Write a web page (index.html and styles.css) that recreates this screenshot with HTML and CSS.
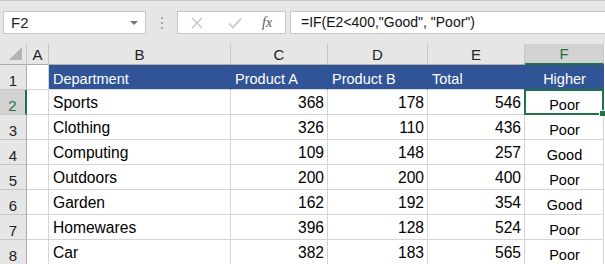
FILE: index.html
```html
<!DOCTYPE html>
<html lang="en">

<head>
    <meta charset="UTF-8">
    <title>Sheet</title>
    <link rel="stylesheet" href="styles.css">
</head>

<body>
    <!-- formula bar -->
    <div class="toolbar">
        <div class="name-box">
            <span>F2</span>
            <span class="drop"></span>
        </div>
        <div class="dots"><i></i><i></i><i></i></div>
        <div class="fx-buttons">
            <svg class="btn-icon" width="12" height="12" viewBox="0 0 12 12">
                <path d="M1 1 L11 11 M11 1 L1 11" stroke="#c4c4c4" stroke-width="1.4" fill="none" />
            </svg>
            <svg class="btn-icon" width="14" height="12" viewBox="0 0 14 12">
                <path d="M1 6.5 L5 10.5 L13 1.5" stroke="#c4c4c4" stroke-width="1.6" fill="none" />
            </svg>
            <span class="fx">fx</span>
        </div>
        <div class="formula">=IF(E2&lt;400,"Good", "Poor")</div>
    </div>

    <!-- grid -->
    <div class="sheet">
        <div class="hd corner"><span class="tri"></span></div>
        <div class="hd col">A</div>
        <div class="hd col">B</div>
        <div class="hd col">C</div>
        <div class="hd col">D</div>
        <div class="hd col">E</div>
        <div class="hd col active-col">F</div>

        <div class="hd row">1</div>
        <div class="cell"></div>
        <div class="cell th">Department</div>
        <div class="cell th">Product A</div>
        <div class="cell th">Product B</div>
        <div class="cell th">Total</div>
        <div class="cell th center">Higher</div>

        <div class="hd row active-row">2</div>
        <div class="cell"></div>
        <div class="cell">Sports</div>
        <div class="cell num">368</div>
        <div class="cell num">178</div>
        <div class="cell num">546</div>
        <div class="cell res selected">Poor</div>

        <div class="hd row">3</div>
        <div class="cell"></div>
        <div class="cell">Clothing</div>
        <div class="cell num">326</div>
        <div class="cell num">110</div>
        <div class="cell num">436</div>
        <div class="cell res">Poor</div>

        <div class="hd row">4</div>
        <div class="cell"></div>
        <div class="cell">Computing</div>
        <div class="cell num">109</div>
        <div class="cell num">148</div>
        <div class="cell num">257</div>
        <div class="cell res">Good</div>

        <div class="hd row">5</div>
        <div class="cell"></div>
        <div class="cell">Outdoors</div>
        <div class="cell num">200</div>
        <div class="cell num">200</div>
        <div class="cell num">400</div>
        <div class="cell res">Poor</div>

        <div class="hd row">6</div>
        <div class="cell"></div>
        <div class="cell">Garden</div>
        <div class="cell num">162</div>
        <div class="cell num">192</div>
        <div class="cell num">354</div>
        <div class="cell res">Good</div>

        <div class="hd row">7</div>
        <div class="cell"></div>
        <div class="cell">Homewares</div>
        <div class="cell num">396</div>
        <div class="cell num">128</div>
        <div class="cell num">524</div>
        <div class="cell res">Poor</div>

        <div class="hd row">8</div>
        <div class="cell"></div>
        <div class="cell">Car</div>
        <div class="cell num">382</div>
        <div class="cell num">183</div>
        <div class="cell num">565</div>
        <div class="cell res">Poor</div>
    </div>
</body>

</html>
```

FILE: styles.css
```css
body {
    margin: 0;
    font-family: "Liberation Sans", Arial, sans-serif;
    background-color: #fff;
    overflow: hidden;
}

/* formula bar */
.toolbar {
    display: flex;
    align-items: flex-start;
    height: 44px;
    box-sizing: border-box;
    padding: 10px 0 0 3px;
    background-color: #e6e6e6;
    border-top: 1px solid #c6c6c6;
}

.name-box {
    display: flex;
    align-items: center;
    justify-content: space-between;
    width: 143px;
    height: 23px;
    box-sizing: border-box;
    padding: 0 7px 0 7px;
    background-color: #fff;
    border: 1px solid #c6c6c6;
    font-size: 15px;
    color: #222;
}

.drop {
    width: 0;
    height: 0;
    border-left: 4px solid transparent;
    border-right: 4px solid transparent;
    border-top: 4px solid #777;
}

.dots {
    display: flex;
    flex-direction: column;
    gap: 3px;
    width: 31px;
    align-items: center;
    padding-top: 6px;
}

.dots i {
    display: block;
    width: 2px;
    height: 2px;
    background-color: #a6a6a6;
}

.fx-buttons {
    display: flex;
    align-items: center;
    width: 109px;
    height: 23px;
    box-sizing: border-box;
    padding: 0 0 0 13px;
    gap: 25px;
    background-color: #fff;
    border: 1px solid #c6c6c6;
}

.fx {
    font-family: "Liberation Serif", serif;
    font-style: italic;
    font-size: 14px;
    color: #555;
    margin-left: -5px;
}

.formula {
    flex: 1;
    height: 23px;
    box-sizing: border-box;
    margin-left: 4px;
    padding: 2px 0 0 10px;
    background-color: #fff;
    border: 1px solid #c6c6c6;
    border-right: none;
    font-size: 14px;
    color: #111;
}

/* sheet grid */
.sheet {
    display: grid;
    grid-template-columns: 27px 22px 182px 97px 100px 97px 79px;
    grid-template-rows: 21px repeat(8, 25px);
}

.hd {
    box-sizing: border-box;
    background-color: #e6e6e6;
    border-right: 1px solid #c6c6c6;
    border-bottom: 1px solid #c6c6c6;
    color: #222;
    font-size: 15px;
    display: flex;
    justify-content: center;
    align-items: flex-end;
    padding-bottom: 1px;
}

.corner {
    position: relative;
    border-bottom: 1px solid #ababab;
}

.tri {
    position: absolute;
    right: 4px;
    bottom: 4px;
    width: 0;
    height: 0;
    border-left: 13px solid transparent;
    border-bottom: 13px solid #b4b4b4;
}

.col {
    border-bottom: 1px solid #ababab;
}

.active-col {
    background-color: #d2d2d2;
    color: #217346;
    border-bottom: 2px solid #217346;
}

.row {
    padding-bottom: 0;
    border-right: 1px solid #ababab;
}

.active-row {
    background-color: #d2d2d2;
    color: #217346;
    border-right: 2px solid #217346;
}

.cell {
    box-sizing: border-box;
    border-right: 1px solid #d4d4d4;
    border-bottom: 1px solid #d4d4d4;
    font-size: 15.6px;
    color: #000;
    display: flex;
    align-items: flex-end;
    padding: 0 3px 2px 4px;
    white-space: nowrap;
}

.th {
    background-color: #305496;
    border-right-color: #305496;
    color: #fff;
    font-size: 14.5px;
    padding-bottom: 2px;
}

.center {
    justify-content: center;
}

.num {
    justify-content: flex-end;
}

.res {
    justify-content: center;
    font-size: 14.5px;
    padding-bottom: 1px;
}

.selected {
    position: relative;
}

.selected::after {
    content: '';
    position: absolute;
    left: -1px;
    top: -1px;
    right: -1px;
    bottom: -1px;
    border: 2px solid #217346;
}

.selected::before {
    content: '';
    position: absolute;
    right: -3px;
    bottom: -3px;
    width: 5px;
    height: 5px;
    background-color: #217346;
    border: 1px solid #fff;
    z-index: 2;
}
```
